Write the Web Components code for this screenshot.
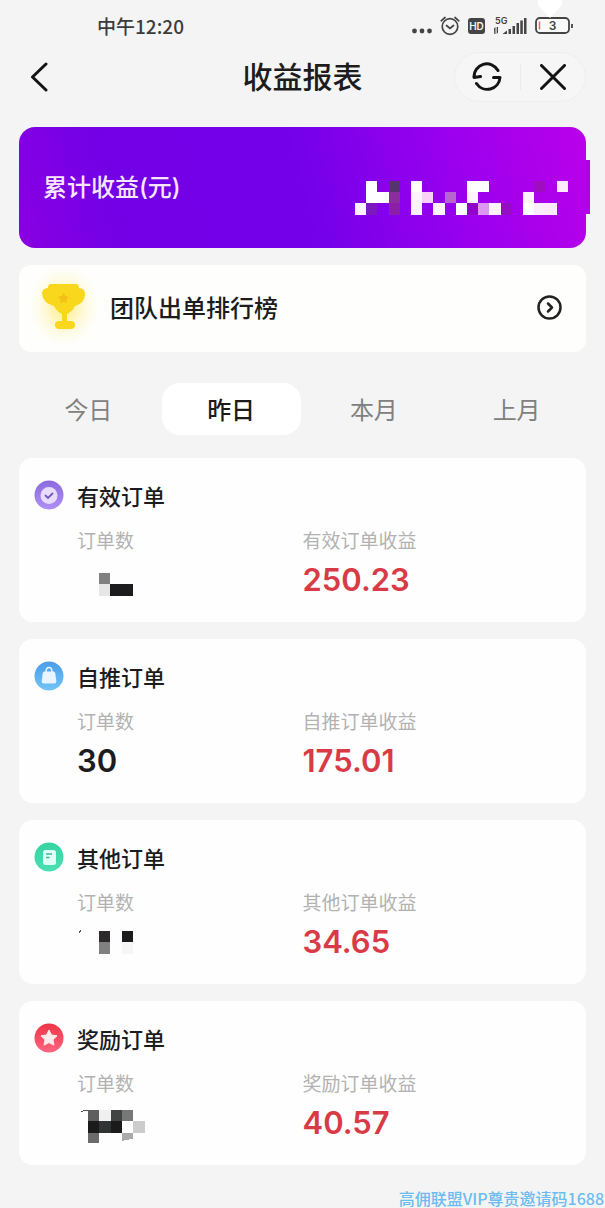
<!DOCTYPE html>
<html lang="zh-CN">
<head>
<meta charset="utf-8">
<meta name="viewport" content="width=device-width, initial-scale=1">
<title>收益报表</title>
<style>
  body {
    margin: 0;
    background: #f4f4f4;
    color: #1c1c1e;
    font-family: "Noto Sans CJK SC", sans-serif;
  }
</style>
</head>
<body>
<report-app></report-app>

<script>
const define = (name, html, setup) => {
  const template = document.createElement('template');
  template.innerHTML = html;
  customElements.define(name, class extends HTMLElement {
    connectedCallback() {
      if (this.shadowRoot) return;
      const root = this.attachShadow({ mode: 'open' });
      root.append(template.content.cloneNode(true));
      if (setup) setup(this, root);
    }
  });
};

/* Masked figures: each cell is [column, row, colour] */
const masks = {
  total: { w: 213, h: 54, s: 11.2, x: 0, y: 20, cells: [
    [1,0,'#fff'],[3,0,'#55336e'],[5,0,'#fff'],[10,0,'#fff'],[11,0,'#fff'],[16,0,'#a00cc0'],[18,0,'#fdeafd'],
    [1,1,'#fff'],[2,1,'#fff'],[3,1,'#8c2d9d'],[5,1,'#fff2fc'],[6,1,'#fbd0f8'],[8,1,'#b666cc'],[10,1,'#fff2fc'],[15,1,'#fff2fc'],
    [0,2,'#fff2fc'],[1,2,'#7c18c0'],[3,2,'#8c1fa8'],[5,2,'#fff2fc'],[7,2,'#fff2fc'],[9,2,'#fff'],[10,2,'#9004c8'],[11,2,'#dc98f0'],[12,2,'#fff2fc'],[13,2,'#960bc4'],[15,2,'#fff'],[16,2,'#fdeafd'],[17,2,'#fdeafd']] },
  valid: { w: 80, h: 40, s: 11.3, x: 22, y: 13, cells: [
    [0,0,'#808080'],[0,1,'#e6e6e6'],[1,1,'#1c1c1e'],[2,1,'#1c1c1e']] },
  other: { w: 80, h: 40, s: 11.3, x: 22, y: 9, cells: [
    [0,0,'#2d2a2b'],[0,1,'#808080'],[2,0,'#1c1c1e'],[2,1,'#f6f6f6']], extra: '<path d="M3.5 8 2.5 11" stroke="#555"/>' },
  bonus: { w: 80, h: 40, s: 11.3, x: 11, y: 7, cells: [
    [0,0,'#5e5e5e'],[1,0,'#f0f0f0'],[2,0,'#424444'],[3,0,'#777'],
    [0,1,'#1b1b1b'],[1,1,'#303333'],[2,1,'#1b1b1b'],[4,1,'#ccc'],
    [0,2,'#6b6b6b']], extra: '<path d="M44.9 29.6h11.3v6L44.9 38z" fill="#aaa"/><path d="M4 9q3-2 7-1.500" fill="none" stroke="#555"/>' }
};

define('masked-figure', `
  <style>
    :host { display: block; }
    svg { display: block; shape-rendering: crispEdges; }
  </style>
  <div role="img" aria-label="***"></div>
`, (host, root) => {
  const m = masks[host.getAttribute('kind')];
  const rects = m.cells.map(([c, r, f]) =>
    `<rect x="${m.x + c * m.s}" y="${m.y + r * m.s}" width="${m.s}" height="${m.s}" fill="${f}"/>`).join('');
  root.querySelector('div').innerHTML =
    `<svg width="${m.w}" height="${m.h}" viewBox="0 0 ${m.w} ${m.h}">${rects}${m.extra || ''}</svg>`;
});

define('status-bar', `
  <style>
    :host { display: block; position: relative; }
    .bar { display: flex; justify-content: space-between; align-items: center; height: 52px; padding: 0 32px 0 97px; }
    time { font-size: 19px; line-height: 24px; font-weight: 500; color: #3c3c3c; }
    .icons { display: flex; align-items: center; gap: 8px; color: #444; }
    svg { display: block; }
    .notch { position: absolute; top: 0; right: 42px; }
    text { font-family: Inter, sans-serif; font-weight: 600; }
  </style>
  <svg class="notch" width="26" height="18" viewBox="0 0 26 18" aria-hidden="true"><path d="M1 0h24v5L13 18 1 5z" fill="#fff"/></svg>
  <div class="bar">
    <time datetime="12:20">中午12:20</time>
    <div class="icons">
      <svg width="20" height="20" viewBox="0 0 20 20" fill="currentColor"><circle cx="2.5" cy="15" r="2.4"/><circle cx="10" cy="15" r="2.4"/><circle cx="17.5" cy="15" r="2.4"/></svg>
      <svg width="20" height="20" viewBox="0 0 20 20" fill="none" stroke="currentColor" stroke-width="1.7" stroke-linecap="round"><circle cx="10" cy="10.5" r="7.8"/><path d="m6.5 9.5 3.5 3 3.5-3M1.2 4.8 5 1.5M18.8 4.8 15 1.5"/></svg>
      <svg width="17" height="16" viewBox="0 0 17 16"><rect width="17" height="16" rx="3" fill="currentColor"/><text x="8.500" y="12" font-size="10" text-anchor="middle" fill="#f4f4f4">HD</text></svg>
      <svg width="34" height="20" viewBox="0 0 34 20" fill="currentColor"><text x="2" y="8" font-size="9">5G</text><path d="M1 12.500 2.500 11v7H1.300zM5 11v5.500L3.700 18v-7zM9.500 18l4.500-3.500V18zM15.500 13h2.500v5h-2.500zM19.500 10H22v8h-2.500zM23.500 7H26v11h-2.500zM27.300 4.500h2.500V18h-2.500zM31 2h2.500v16H31z"/></svg>
      <svg width="38" height="18" viewBox="0 0 38 18"><rect x="1" y="1" width="33" height="15" rx="4" fill="#fff" fill-opacity=".5" stroke="currentColor" stroke-width="1.800"/><path d="M4.500 4.500v8" stroke="#e36a6a" stroke-width="1.500"/><path d="M37 7v4" stroke="currentColor" stroke-width="1.800"/><text x="17.500" y="13" font-size="12" text-anchor="middle" fill="currentColor">3</text></svg>
    </div>
  </div>
`);

define('nav-bar', `
  <style>
    :host { display: block; }
    header { display: grid; grid-template-columns: 1fr auto 1fr; align-items: center; height: 50px; padding: 0 19px; }
    h1 { margin: 0; padding-bottom: 4px; font-size: 30px; line-height: 40px; font-weight: 500; color: #1c1c1e; }
    button { display: grid; place-items: center; border: 0; padding: 0; background: none; color: #141414; cursor: pointer; }
    .back { width: 40px; height: 40px; }
    .capsule { justify-self: end; display: grid; grid-template-columns: 1fr 1px 1fr; align-items: center; box-sizing: border-box; width: 132px; height: 50px; border: 1px solid #eeeeee; border-radius: 25px; background: #f6f6f6; }
    .capsule i { height: 26px; background: #ebebeb; }
    .capsule button { height: 48px; }
    svg { display: block; fill: none; stroke: currentColor; stroke-width: 3; stroke-linecap: round; stroke-linejoin: round; }
  </style>
  <header>
    <button class="back" aria-label="返回"><svg width="18" height="30" viewBox="0 0 18 30"><path d="M16 2 2.500 15 16 28"/></svg></button>
    <h1><slot></slot></h1>
    <div class="capsule">
      <button aria-label="刷新"><svg width="30" height="30" viewBox="0 0 30 30"><path d="M26 8.500A12.800 12.800 0 0 0 2 15.500L8.500 14.500M4.500 21.500A12.800 12.800 0 0 0 28 15.500H21.500"/></svg></button>
      <i></i>
      <button aria-label="关闭"><svg width="26" height="26" viewBox="0 0 26 26"><path d="m1.500 1.500 23 23M24.500 1.500l-23 23"/></svg></button>
    </div>
  </header>
`);

define('total-card', `
  <style>
    :host { display: block; position: relative; }
    section { display: flex; align-items: center; justify-content: space-between; height: 121px; padding: 0 18px 0 24px; border-radius: 16px; background: linear-gradient(75deg, #8a00e2 0, #7200e6 18%, #7400ea 50%, #9c00ee 78%, #ba00ea 100%); }
    section::after { content: ""; position: absolute; left: 100%; top: 33px; width: 4px; height: 54px; background: #b200e6; }
    h2 { margin: 0; font: 500 24px/32px Inter, "Noto Sans CJK SC", sans-serif; color: #f6e6ff; }
  </style>
  <section><h2><slot></slot></h2><masked-figure kind="total"></masked-figure></section>
`);

define('rank-link', `
  <style>
    :host { display: block; }
    a { display: flex; align-items: center; height: 84px; padding: 0 24px 3px 10px; border-radius: 12px; background: #fefefd; color: #1c1c1e; text-decoration: none; font-size: 24px; line-height: 32px; font-weight: 500; }
    .trophy { margin-right: 9px; }
    .go { margin-left: auto; }
    svg { display: block; }
  </style>
  <a href="#rank">
    <svg class="trophy" width="72" height="84" viewBox="0 0 72 84" aria-hidden="true">
      <defs><radialGradient id="glow"><stop offset=".3" stop-color="#fff3b0"/><stop offset="1" stop-color="#fffbe0" stop-opacity="0"/></radialGradient></defs>
      <ellipse cx="35" cy="41" rx="36" ry="42" fill="url(#glow)"/>
      <path d="M22 19h25q3 0 3 4 6 0 6 6 0 9-10 12-3 6-8 8v7h4q4 0 4 4t-4 4H30q-4 0-4-4t4-4h3v-7q-5-2-8-8-11-3-12-12 0-6 6-6 0-4 3-4z" fill="#f9d71c"/>
      <path d="m34.500 28 2 3 3.500 1-2.500 2.500v4l-3-2-3 2v-4L29 32l3.500-1z" fill="#f2c117"/>
    </svg>
    <slot></slot>
    <svg class="go" width="25" height="25" viewBox="0 0 25 25" fill="none" stroke="#222" stroke-width="2.500" stroke-linecap="round" stroke-linejoin="round"><circle cx="12.500" cy="12.500" r="11"/><path d="m11 8.500 4 4-4 4"/></svg>
  </a>
`);

define('period-tabs', `
  <style>
    :host { display: block; }
    div { display: grid; grid-template-columns: repeat(4, 1fr); gap: 4px; }
    button { height: 52px; border: 0; border-radius: 18px; padding: 0; background: none; font: 400 24px/32px "Noto Sans CJK SC", sans-serif; color: #808080; cursor: pointer; }
    button[aria-selected="true"] { background: #fff; color: #1c1c1e; font-weight: 500; }
  </style>
  <div role="tablist" aria-label="时间范围">
    <button role="tab" aria-selected="false">今日</button>
    <button role="tab" aria-selected="true">昨日</button>
    <button role="tab" aria-selected="false">本月</button>
    <button role="tab" aria-selected="false">上月</button>
  </div>
`, (host, root) => {
  const tabs = root.querySelectorAll('button');
  tabs.forEach(tab => tab.addEventListener('click', () =>
    tabs.forEach(t => t.setAttribute('aria-selected', String(t === tab)))));
});

const badges = {
  valid: ['#8a6ade', '#b08ff5', '<circle cx="15" cy="15.500" r="8.500" fill="#e8dcfd"/><path d="m11.500 15.500 2.500 2.500 4.500-4.500" fill="none" stroke="#7455bd" stroke-width="1.800" stroke-linecap="round"/>'],
  self: ['#4b9de8', '#72c4f8', '<path d="M12 11q0-4.500 3-4.500t3 4.500" fill="none" stroke="#e6f3ff" stroke-width="1.500"/><path d="M10.500 10.500h9q1.500 0 1.800 2l1 7.500q.2 2.500-2 2.500H9.700q-2.200 0-2-2.500l1-7.500q.3-2 1.800-2z" fill="#e8f4ff"/>'],
  other: ['#36d3a0', '#4adfb4', '<rect x="9" y="8" width="13" height="15" rx="2.500" fill="#e2fff7"/><path d="M12 12h6M12 15.500h3.500" stroke="#3eb996" stroke-width="1.500"/>'],
  bonus: ['#ee3546', '#ff6480', '<path d="m15 7 2.500 5 5.500.8-4 3.900 1 5.500-5-2.600-5 2.600 1-5.500-4-3.900 5.500-.8z" fill="#ffe9ec" stroke="#ffe9ec" stroke-linejoin="round"/>']
};

define('order-card', `
  <style>
    :host { display: block; }
    article { box-sizing: border-box; min-height: 164px; padding: 22px 0; border-radius: 14px; background: #fefefe; }
    header { display: flex; align-items: center; gap: 13px; padding-left: 15px; }
    h3 { margin: 0; font-size: 22px; line-height: 30px; font-weight: 500; color: #1c1c1e; }
    dl { display: grid; grid-template-columns: 1fr 1fr; margin: 20px 0 0; }
    dl div:first-child { padding-left: 58px; }
    dt { font-size: 19px; line-height: 20px; color: #b2b2b2; }
    dd { margin: 10px 0 0; height: 40px; font: 600 31px/40px Inter, sans-serif; color: #1c1c1e; }
    .income { color: #d83b46; }
    svg { display: block; }
  </style>
  <article>
    <header><span></span><h3></h3></header>
    <dl>
      <div><dt>订单数</dt><dd><slot></slot></dd></div>
      <div><dt class="label"></dt><dd class="income"></dd></div>
    </dl>
  </article>
`, (host, root) => {
  const name = host.getAttribute('name');
  const [top, bottom, glyph] = badges[host.getAttribute('badge')];
  root.querySelector('h3').textContent = name;
  root.querySelector('.label').textContent = name + '收益';
  root.querySelector('.income').textContent = host.getAttribute('income');
  root.querySelector('span').innerHTML = `<svg width="30" height="30" viewBox="0 0 30 30" aria-hidden="true">
    <defs><linearGradient id="g" x2="0" y2="1"><stop stop-color="${top}"/><stop offset="1" stop-color="${bottom}"/></linearGradient></defs>
    <circle cx="15" cy="15" r="14.500" fill="url(#g)"/>${glyph}</svg>`;
});

define('report-app', `
  <style>
    :host { display: flex; flex-direction: column; min-height: 100vh; }
    main { padding: 25px 19px 0; }
    rank-link { margin-top: 17px; }
    period-tabs { margin-top: 31px; }
    .orders { display: grid; gap: 17px; margin-top: 23px; }
    footer { margin-top: auto; padding-right: 1px; text-align: right; font-size: 16px; line-height: 20px; font-weight: 500; color: #6cbcf0; }
  </style>
  <status-bar></status-bar>
  <nav-bar>收益报表</nav-bar>
  <main>
    <total-card>累计收益(元)</total-card>
    <rank-link>团队出单排行榜</rank-link>
    <period-tabs></period-tabs>
    <div class="orders">
      <order-card badge="valid" name="有效订单" income="250.23"><masked-figure kind="valid"></masked-figure></order-card>
      <order-card badge="self" name="自推订单" income="175.01">30</order-card>
      <order-card badge="other" name="其他订单" income="34.65"><masked-figure kind="other"></masked-figure></order-card>
      <order-card badge="bonus" name="奖励订单" income="40.57"><masked-figure kind="bonus"></masked-figure></order-card>
    </div>
  </main>
  <footer>高佣联盟VIP尊贵邀请码1688</footer>
`);
</script>
</body>
</html>
